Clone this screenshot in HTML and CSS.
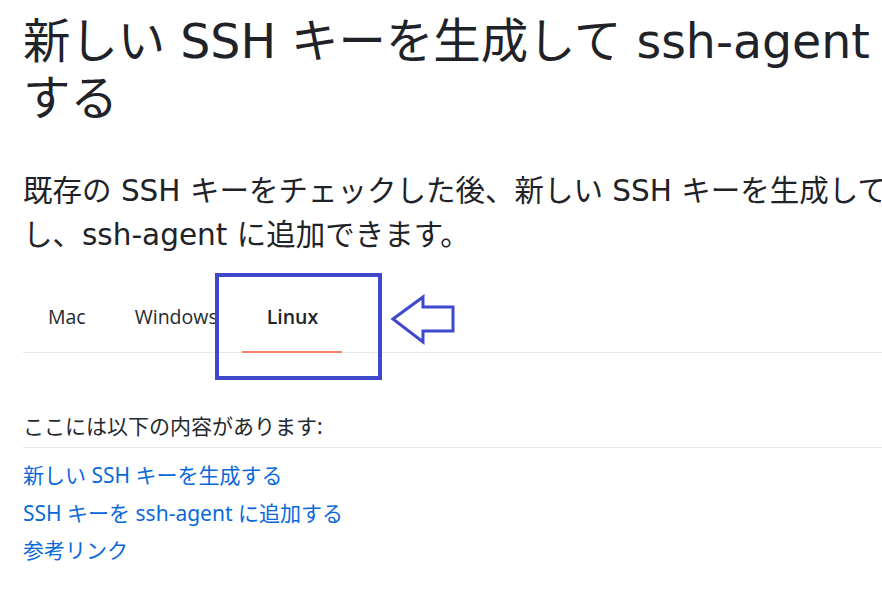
FILE: index.html
```html
<!DOCTYPE html>
<html lang="ja">
<head>
  <meta charset="UTF-8">
  <title>新しい SSH キーを生成して ssh-agent に追加する</title>
  <meta name="viewport" content="width=device-width, initial-scale=1">
  <link rel="stylesheet" href="styles.css">
</head>
<body>
  <div class="article">
    <h1 class="title">新しい SSH キーを生成して ssh-agent に追加する</h1>
    <p class="lead">既存の SSH キーをチェックした後、新しい SSH キーを生成して認証に使用し、ssh-agent に追加できます。</p>

    <ul class="tabs">
      <li class="tab">Mac</li>
      <li class="tab">Windows</li>
      <li class="tab active">Linux</li>
    </ul>

    <div class="toc">
      <div class="toc-title">ここには以下の内容があります:</div>
      <ul class="toc-list">
        <li><a href="#generate">新しい SSH キーを生成する</a></li>
        <li><a href="#add">SSH キーを ssh-agent に追加する</a></li>
        <li><a href="#links">参考リンク</a></li>
      </ul>
    </div>
  </div>

  <!-- annotation drawn on top of the screenshot -->
  <div class="mark-box"></div>
  <svg class="mark-arrow" width="66" height="52" viewBox="0 0 66 52">
    <polygon points="3,25 33,3 33,13 63,13 63,37 33,37 33,48" fill="none" stroke="#3f48cc" stroke-width="3"/>
  </svg>
</body>
</html>
```

FILE: styles.css
```css
html, body {
  margin: 0;
  padding: 0;
  background: #fff;
  overflow: hidden;
}
body {
  font-family: "DejaVu Sans", "Noto Sans CJK JP", sans-serif;
  color: #1f2328;
  width: 882px;
  height: 609px;
  position: relative;
}
.article {
  width: 1040px;
  padding-left: 23px;
}
.title {
  margin: 13px 0 0 0;
  font-size: 47.4px;
  font-weight: 400;
  line-height: 57px;
}
.lead {
  width: 1020px;
  margin: 42px 0 0 0;
  font-size: 29.5px;
  line-height: 44px;
}
.tabs {
  list-style: none;
  margin: 32px 0 0 0;
  padding: 0;
  display: flex;
  border-bottom: 1px solid #e4e6e9;
  font-family: "Open Sans", "Noto Sans CJK JP", sans-serif;
}
.tab {
  padding: 16px 24px 22px 25px;
  font-size: 19.5px;
  line-height: 24px;
  color: #24292f;
  border-bottom: 2px solid transparent;
  margin-bottom: -1px;
}
.tab.active {
  font-weight: 600;
  color: #1f2328;
  border-bottom-color: #f4806e;
}
.toc {
  margin-top: 58px;
  font-family: "Noto Sans", "Noto Sans CJK JP", sans-serif;
}
.toc-title {
  font-size: 21px;
  line-height: 30px;
  color: #24292f;
  padding-bottom: 6px;
  border-bottom: 1px solid #e8e8e8;
}
.toc-list {
  list-style: none;
  margin: 0;
  padding: 9px 0 0 0;
}
.toc-list li {
  font-size: 21px;
  line-height: 37.5px;
}
.toc-list a {
  color: #0969da;
  text-decoration: none;
}
.mark-box {
  position: absolute;
  left: 215px;
  top: 273px;
  width: 159px;
  height: 99px;
  border: 4px solid #3f48cc;
}
.mark-arrow {
  position: absolute;
  left: 390px;
  top: 294px;
}
```
